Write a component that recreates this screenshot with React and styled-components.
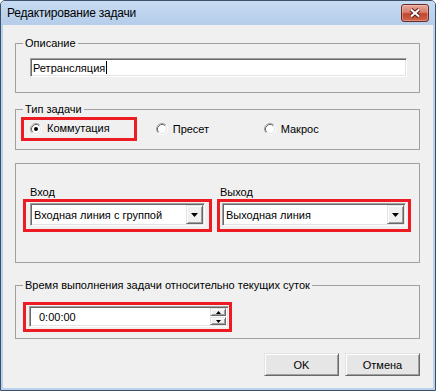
import React from 'react'
import styled, { createGlobalStyle } from 'styled-components'

const Global = createGlobalStyle`
  html, body {
    margin: 0;
    padding: 0;
    background: #ffffff;
  }
  body {
    font-family: "Liberation Sans", Arial, sans-serif;
    font-size: 11px;
    color: #000000;
  }
`

const Window = styled.div`
  width: 436px;
  height: 391px;
  box-sizing: border-box;
  border: 1px solid #3d5068;
  border-radius: 5px 5px 0 0;
  background: #b9d1ea;
  display: flex;
  flex-direction: column;
  overflow: hidden;
`

const TitleBar = styled.div`
  height: 24px;
  flex: none;
  display: flex;
  align-items: center;
  justify-content: space-between;
  padding: 0 6px;
  background: linear-gradient(#c7dbf2, #b5cdea);
  font-family: "Liberation Sans", Arial, sans-serif;
  font-size: 12px;
  letter-spacing: -0.2px;
`

const CloseButton = styled.div`
  width: 28px;
  height: 18px;
  box-sizing: border-box;
  border: 1px solid #6a2a24;
  border-radius: 3px;
  background: linear-gradient(#e8a697 0%, #d7806c 45%, #c4462f 55%, #cf634c 100%);
  box-shadow: inset 0 0 0 1px rgba(255, 255, 255, 0.3);
  display: flex;
  align-items: center;
  justify-content: center;
`

const Body = styled.div`
  flex: 1;
  margin: 0 2px 2px;
  background: #f0f0f0;
  padding: 18px 13px 12px 12px;
  display: flex;
  flex-direction: column;
`

const GroupBox = styled.div`
  position: relative;
  box-sizing: border-box;
  flex: none;
  height: ${p => p.$h}px;
  margin-top: ${p => p.$mt || 0}px;
  padding: ${p => p.$pad};
  border: 1px solid #a0a0a0;
`

const Legend = styled.span`
  position: absolute;
  top: -7px;
  left: 7px;
  padding: 0 2px;
  line-height: 13px;
  background: #f0f0f0;
`

const Sunken = styled.div`
  box-sizing: border-box;
  height: ${p => p.$h || 21}px;
  width: ${p => (p.$w ? `${p.$w}px` : 'auto')};
  background: #ffffff;
  border: 1px solid;
  border-color: #a0a0a0 #ffffff #ffffff #a0a0a0;
  box-shadow: inset 1px 1px #696969, inset -1px -1px #e3e3e3;
  display: flex;
  align-items: center;
  padding: 1px 1px 1px ${p => p.$indent || 2}px;
`

const Caret = styled.span`
  width: 1px;
  height: 13px;
  margin-left: 1px;
  background: #000000;
`

const Highlight = styled.div`
  box-sizing: border-box;
  border: 3px solid #ed1c24;
  padding: ${p => p.$pad};
  display: flex;
  align-items: center;
`

const RadioRow = styled.div`
  display: flex;
  align-items: center;
`

const RadioOption = styled.div`
  display: flex;
  align-items: center;
  gap: 5px;
  line-height: 13px;
  width: ${p => (p.$w ? `${p.$w}px` : 'auto')};
  margin-left: ${p => p.$ml || 0}px;
`

const Columns = styled.div`
  display: flex;
  gap: 5px;
`

const Column = styled.div`
  display: flex;
  flex-direction: column;
`

const FieldLabel = styled.div`
  line-height: 13px;
  padding-left: ${p => p.$indent}px;
`

const ComboText = styled.span`
  flex: 1;
  white-space: nowrap;
`

const DropButton = styled.div`
  box-sizing: border-box;
  width: 17px;
  height: 100%;
  background: #f0f0f0;
  border: 1px solid;
  border-color: #e3e3e3 #696969 #696969 #e3e3e3;
  box-shadow: inset 1px 1px #ffffff, inset -1px -1px #a0a0a0;
  display: flex;
  align-items: center;
  justify-content: center;
`

const Spinner = styled.div`
  display: flex;
  flex-direction: column;
  gap: 1px;
  margin-right: 1px;
`

const SpinButton = styled.div`
  box-sizing: border-box;
  width: 16px;
  height: 8px;
  background: #f0f0f0;
  border: 1px solid;
  border-color: #e3e3e3 #696969 #696969 #e3e3e3;
  box-shadow: inset 1px 1px #ffffff, inset -1px -1px #a0a0a0;
  display: flex;
  align-items: center;
  justify-content: center;
`

const ButtonRow = styled.div`
  display: flex;
  justify-content: flex-end;
  gap: 6px;
  margin-top: 14px;
`

const Button = styled.button`
  box-sizing: border-box;
  width: 75px;
  height: 23px;
  padding: 0;
  font: inherit;
  color: #000000;
  background: #e6e6e6;
  border: 1px solid;
  border-color: #e3e3e3 #696969 #696969 #e3e3e3;
  box-shadow: inset 1px 1px #ffffff, inset -1px -1px #a0a0a0;
`

const Radio = ({ checked }) => (
  <svg width="12" height="12" viewBox="0 0 12 12">
    <circle cx="6" cy="6" r="4.5" fill="#ffffff" />
    <path d="M2.11 9.89 A5.5 5.5 0 0 1 9.89 2.11" fill="none" stroke="#a0a0a0" />
    <path d="M9.89 2.11 A5.5 5.5 0 0 1 2.11 9.89" fill="none" stroke="#ffffff" />
    <path d="M2.82 9.18 A4.5 4.5 0 0 1 9.18 2.82" fill="none" stroke="#696969" />
    <path d="M9.18 2.82 A4.5 4.5 0 0 1 2.82 9.18" fill="none" stroke="#e3e3e3" />
    {checked && <circle cx="6" cy="6" r="2" fill="#000000" />}
  </svg>
)

const Arrow = ({ up, w = 7, h = 4 }) => (
  <svg width={w} height={h} viewBox={`0 0 ${w} ${h}`}>
    <polygon
      points={up ? `0,${h} ${w},${h} ${w / 2},0` : `0,0 ${w},0 ${w / 2},${h}`}
      fill="#000000"
    />
  </svg>
)

const Combo = ({ width, indent, children }) => (
  <Sunken $w={width} $h={23} $indent={indent}>
    <ComboText>{children}</ComboText>
    <DropButton>
      <Arrow />
    </DropButton>
  </Sunken>
)

export default function App() {
  return (
    <>
      <Global />
      <Window>
        <TitleBar>
          <span>Редактирование задачи</span>
          <CloseButton>
            <svg width="14" height="10" viewBox="0 0 14 10">
              <path d="M3 1.5 L11 8.5 M11 1.5 L3 8.5" stroke="#5a2019" strokeWidth="4" />
              <path d="M3 1.5 L11 8.5 M11 1.5 L3 8.5" stroke="#ffffff" strokeWidth="2" />
            </svg>
          </CloseButton>
        </TitleBar>
        <Body>
          <GroupBox $h={50} $pad="14px 12px 0 14px">
            <Legend>Описание</Legend>
            <Sunken $h={19} $indent={2}>
              Ретрансляция
              <Caret />
            </Sunken>
          </GroupBox>

          <GroupBox $h={41} $mt={16} $pad="7px 0 0 5px">
            <Legend>Тип задачи</Legend>
            <RadioRow>
              <Highlight $pad="2px 24px 3px 6px">
                <RadioOption>
                  <Radio checked />
                  Коммутация
                </RadioOption>
              </Highlight>
              <RadioOption $ml={19} $w={108}>
                <Radio />
                Пресет
              </RadioOption>
              <RadioOption>
                <Radio />
                Макрос
              </RadioOption>
            </RadioRow>
          </GroupBox>

          <GroupBox $h={100} $mt={13} $pad="22px 0 0 7px">
            <Columns>
              <Column>
                <FieldLabel $indent={7}>Вход</FieldLabel>
                <Highlight $pad="1px 4px 3px">
                  <Combo width={175} indent={3}>Входная линия с группой</Combo>
                </Highlight>
              </Column>
              <Column>
                <FieldLabel $indent={3}>Выход</FieldLabel>
                <Highlight $pad="1px 2px 3px">
                  <Combo width={184} indent={3}>Выходная линия</Combo>
                </Highlight>
              </Column>
            </Columns>
          </GroupBox>

          <GroupBox $h={54} $mt={22} $pad="16px 0 0 7px">
            <Legend>Время выполнения задачи относительно текущих суток</Legend>
            <RadioRow>
              <Highlight $pad="1px 0 2px 3px">
                <Sunken $w={200} $h={21} $indent={9}>
                  <ComboText>0:00:00</ComboText>
                  <Spinner>
                    <SpinButton>
                      <Arrow up w={5} h={3} />
                    </SpinButton>
                    <SpinButton>
                      <Arrow w={5} h={3} />
                    </SpinButton>
                  </Spinner>
                </Sunken>
              </Highlight>
            </RadioRow>
          </GroupBox>

          <ButtonRow>
            <Button>OK</Button>
            <Button>Отмена</Button>
          </ButtonRow>
        </Body>
      </Window>
    </>
  )
}
